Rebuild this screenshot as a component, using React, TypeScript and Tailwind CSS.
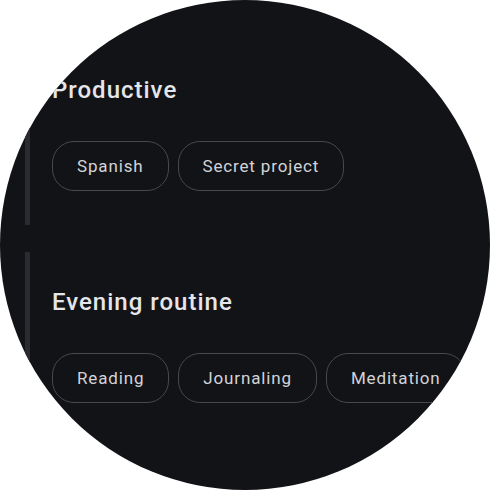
import React from 'react';

type Section = {
	title: string;
	chips: string[];
};

const sections: Section[] = [
	{ title: 'Productive', chips: ['Spanish', 'Secret project'] },
	{ title: 'Evening routine', chips: ['Reading', 'Journaling', 'Meditation'] },
];

const Chip: React.FC<{ label: string }> = ({ label }) => (
	<div className="h-[50px] shrink-0 flex items-center pt-[1px] px-[24px] rounded-[22px] border-[1.5px] border-[#48494e] text-[17px] text-[#d2d3d7] tracking-[0.85px] whitespace-nowrap">
		{label}
	</div>
);

export default function App() {
	return (
		<div className="w-[490px] h-[490px] bg-white">
			<div
				className="w-[490px] h-[490px] rounded-full overflow-hidden bg-[#121317] pt-[40px] flex flex-col gap-[27px]"
				style={{ fontFamily: 'Roboto, "Noto Sans", sans-serif' }}
			>
				{sections.map((s) => (
					<div key={s.title} className="ml-[25px] border-l-[5px] border-[#2a2b30] pl-[22px] pt-[34px] pb-[34px]">
						<div className="text-[24px] leading-[32px] font-medium text-[#e6e6ea] tracking-[1px]">{s.title}</div>
						<div className="mt-[35px] flex gap-[9px]">
							{s.chips.map((c) => (
								<Chip key={c} label={c} />
							))}
						</div>
					</div>
				))}
			</div>
		</div>
	);
}
